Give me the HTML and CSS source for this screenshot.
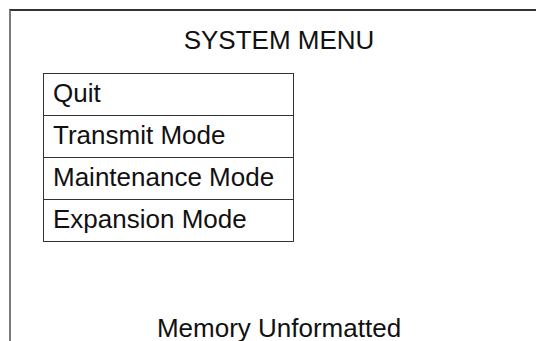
FILE: index.html
```html
<!DOCTYPE html>
<html lang="en">
<head>
    <meta charset="UTF-8">
    <meta name="viewport" content="width=device-width, initial-scale=1.0">
    <title>System Menu</title>
    <link rel="stylesheet" href="styles.css">
</head>
<body>
    <div class="screen">
        <h1 class="title">SYSTEM MENU</h1>

        <ul class="menu">
            <li>Quit</li>
            <li>Transmit Mode</li>
            <li>Maintenance Mode</li>
            <li>Expansion Mode</li>
        </ul>

        <p class="status">Memory Unformatted</p>
    </div>
</body>
</html>
```

FILE: styles.css
```css
html, body { margin: 0; padding: 0; background: #fff; overflow: hidden; }
body { font-family: "Liberation Sans", Arial, sans-serif; font-size: 26px; color: #111; }
.screen { margin: 9px 0 0 9px; width: 536px; height: 330px; border-top: 2px solid #333; border-left: 2px solid #7a7a7a; display: flex; flex-direction: column; align-items: center; }
.title { margin: 14px 0 0; font-size: 26px; font-weight: normal; line-height: 30px; }
.menu { list-style-type: none; margin: 18px 0 0 32px; padding: 0; width: 251px; align-self: flex-start; box-sizing: border-box; border: 1px solid #333; border-bottom: none; }
.menu li { padding: 4px 9px 7px; line-height: 30px; border-bottom: 1px solid #333; }
.status { margin: 73px 0 0; line-height: 26px; }
```
